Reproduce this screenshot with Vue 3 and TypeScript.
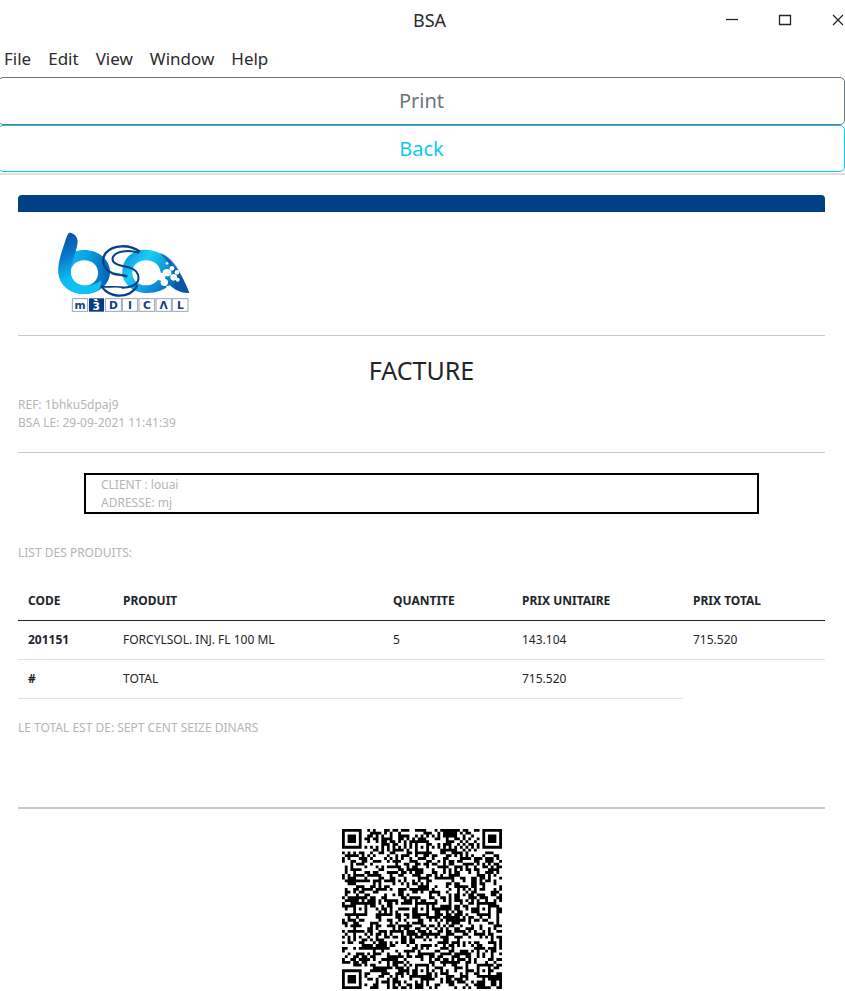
<script setup lang="ts">
const menus: string[] = ['File', 'Edit', 'View', 'Window', 'Help']

interface Line {
  code: string
  product: string
  quantity: number
  unitPrice: string
  total: string
}

const lines: Line[] = [
  { code: '201151', product: 'FORCYLSOL. INJ. FL 100 ML', quantity: 5, unitPrice: '143.104', total: '715.520' },
]

// 57 modules a side: finders, timing tracks and alignment marks over a seeded body.
const SIZE = 57

function buildCode(): string {
  const grid: boolean[][] = []
  let seed = 20210929
  for (let y = 0; y < SIZE; y++) {
    const row: boolean[] = []
    for (let x = 0; x < SIZE; x++) {
      seed ^= seed << 13
      seed ^= seed >>> 17
      seed ^= seed << 5
      row.push(((seed >>> 9) & 255) < 130)
    }
    grid.push(row)
  }
  const finder = (cx: number, cy: number): void => {
    for (let dy = -4; dy <= 4; dy++) {
      for (let dx = -4; dx <= 4; dx++) {
        const x = cx + dx
        const y = cy + dy
        if (x < 0 || y < 0 || x >= SIZE || y >= SIZE) continue
        const ring = Math.max(Math.abs(dx), Math.abs(dy))
        grid[y][x] = ring !== 2 && ring !== 4
      }
    }
  }
  for (let i = 0; i < SIZE; i++) {
    grid[6][i] = i % 2 === 0
    grid[i][6] = i % 2 === 0
  }
  const marks: number[][] = [[28, 6], [6, 28], [28, 28], [50, 28], [28, 50], [50, 50]]
  for (const [cx, cy] of marks) {
    for (let dy = -2; dy <= 2; dy++) {
      for (let dx = -2; dx <= 2; dx++) {
        grid[cy + dy][cx + dx] = Math.max(Math.abs(dx), Math.abs(dy)) !== 1
      }
    }
  }
  finder(3, 3)
  finder(SIZE - 4, 3)
  finder(3, SIZE - 4)
  let d = ''
  for (let y = 0; y < SIZE; y++) {
    let x = 0
    while (x < SIZE) {
      if (!grid[y][x]) {
        x++
        continue
      }
      const start = x
      while (x < SIZE && grid[y][x]) x++
      d += `M${start} ${y}h${x - start}v1h-${x - start}z`
    }
  }
  return d
}

const codePath = buildCode()
const printInvoice = (): void => window.print()
const goBack = (): void => window.history.back()
</script>

<template>
  <div class="window">
    <header class="titlebar">
      <span class="title">BSA</span>
      <div class="controls">
        <button type="button" aria-label="Minimize">
          <svg width="14" height="14" viewBox="0 0 14 14"><path d="M1 6.5h12" /></svg>
        </button>
        <button type="button" aria-label="Maximize">
          <svg width="14" height="14" viewBox="0 0 14 14"><path d="M1.5 2.5h11v9h-11z" /></svg>
        </button>
        <button type="button" aria-label="Close">
          <svg width="14" height="14" viewBox="0 0 14 14"><path d="M2 2l10 10M12 2L2 12" /></svg>
        </button>
      </div>
    </header>

    <nav class="menubar">
      <button v-for="menu in menus" :key="menu" type="button">{{ menu }}</button>
    </nav>

    <div class="actions">
      <button type="button" class="btn print" @click="printInvoice">Print</button>
      <button type="button" class="btn back" @click="goBack">Back</button>
    </div>

    <main class="invoice">
      <div class="band"></div>

      <svg class="logo" width="150" height="95" viewBox="0 0 450 285" role="img" aria-label="BSA Medical">
        <defs>
          <linearGradient id="stem" x1="0" y1="0" x2="0.3" y2="1">
            <stop offset="0" stop-color="#064b9b" />
            <stop offset="0.4" stop-color="#0878ca" />
            <stop offset="0.75" stop-color="#0bbcf2" />
            <stop offset="1" stop-color="#0fc3f6" />
          </linearGradient>
          <linearGradient id="bowl" x1="0" y1="0.4" x2="1" y2="0.6">
            <stop offset="0" stop-color="#14c6f6" />
            <stop offset="0.5" stop-color="#0aa0e2" />
            <stop offset="1" stop-color="#0660b0" />
          </linearGradient>
          <linearGradient id="ring" x1="0" y1="0" x2="1" y2="0.6">
            <stop offset="0" stop-color="#0a83cd" />
            <stop offset="0.35" stop-color="#1bcbf8" />
            <stop offset="0.7" stop-color="#0d91d8" />
            <stop offset="1" stop-color="#075cad" />
          </linearGradient>
        </defs>
        <path fill="url(#bowl)" fill-rule="evenodd" d="M103 75C146 75 180 104 180 141C180 178 146 207 103 207C60 207 26 178 26 141C26 104 60 75 103 75ZM103 106C79 106 62 122 62 144C62 166 79 182 103 182C127 182 144 166 144 144C144 122 127 106 103 106Z" />
        <path fill="url(#stem)" d="M57 23C72 24 82 34 83 48C83 65 75 84 68 112C58 129 60 157 75 170C95 187 130 187 153 166C158 190 139 207 103 207C60 207 29 181 25 143C22 116 35 81 45 50C50 36 52 28 57 23Z" />
        <path fill="url(#ring)" fill-rule="evenodd" d="M284 74C318 74 346 88 366 112C386 136 405 170 418 204C394 205 374 195 359 180C342 196 318 204 292 204C251 204 217 178 217 140C217 102 247 74 284 74ZM289 106C264 106 247 121 247 143C247 165 264 181 288 181C312 181 331 165 331 143C331 121 313 106 289 106Z" />
        <path fill="#0651a4" d="M330 85C368 91 397 149 418 204C398 203 382 194 370 182C382 165 371 127 330 85Z" opacity="0.65" />
        <g fill="#fff">
          <ellipse cx="351" cy="143" rx="13" ry="11" />
          <circle cx="366" cy="130" r="7" />
          <circle cx="381" cy="142" r="7" />
          <circle cx="371" cy="157" r="10" />
          <circle cx="383" cy="164" r="6" />
          <circle cx="343" cy="172" r="11" />
          <circle cx="334" cy="155" r="12" />
          <circle cx="351" cy="115" r="4" />
          <circle cx="326" cy="141" r="6" />
          <circle cx="353" cy="186" r="4" />
        </g>
        <g fill="none" stroke="#073f88">
          <path stroke-width="7" d="M270 80C238 57 189 59 168 83C151 105 160 133 188 145C205 151 220 149 232 155" />
          <path stroke-width="6" d="M267 83C233 74 198 78 189 96C182 113 202 121 228 125C256 130 270 146 264 168C257 183 237 188 215 188" />
          <path stroke-width="7" d="M155 182C166 209 208 220 239 205C251 198 258 190 262 181" />
          <path stroke-width="5" d="M152 184C170 189 192 182 219 187" />
        </g>
        <g fill="#fff" stroke="#9aa2ba" stroke-width="3">
          <rect x="67" y="221" width="46" height="38" />
          <rect x="166" y="221" width="48" height="38" />
          <rect x="217" y="221" width="46" height="38" />
          <rect x="267" y="221" width="47" height="38" />
          <rect x="318" y="221" width="46" height="38" />
          <rect x="367" y="221" width="47" height="38" />
        </g>
        <rect x="117" y="220" width="45" height="40" fill="#063d82" />
        <path d="M130 222h10l5 6h-9z" fill="#fff" />
        <g class="letters">
          <text x="90" y="251">m</text>
          <text x="139" y="255" class="inverse">3</text>
          <text x="190" y="251">D</text>
          <text x="240" y="251">I</text>
          <text x="291" y="251">C</text>
          <text x="341" y="251">Λ</text>
          <text x="391" y="251">L</text>
        </g>
      </svg>

      <section class="heading">
        <h1>FACTURE</h1>
        <p>REF: 1bhku5dpaj9</p>
        <p>BSA LE: 29-09-2021 11:41:39</p>
      </section>

      <section class="client">
        <p>CLIENT : louai</p>
        <p>ADRESSE: mj</p>
      </section>

      <p class="caption">LIST DES PRODUITS:</p>

      <table>
        <colgroup>
          <col class="c-code" />
          <col class="c-product" />
          <col class="c-quantity" />
          <col class="c-unit" />
          <col class="c-total" />
        </colgroup>
        <thead>
          <tr>
            <th scope="col">CODE</th>
            <th scope="col">PRODUIT</th>
            <th scope="col">QUANTITE</th>
            <th scope="col">PRIX UNITAIRE</th>
            <th scope="col">PRIX TOTAL</th>
          </tr>
        </thead>
        <tbody>
          <tr v-for="line in lines" :key="line.code">
            <th scope="row">{{ line.code }}</th>
            <td>{{ line.product }}</td>
            <td>{{ line.quantity }}</td>
            <td>{{ line.unitPrice }}</td>
            <td>{{ line.total }}</td>
          </tr>
          <tr>
            <th scope="row">#</th>
            <td colspan="2">TOTAL</td>
            <td>715.520</td>
          </tr>
        </tbody>
      </table>

      <p class="words">LE TOTAL EST DE: SEPT CENT SEIZE DINARS</p>

      <footer>
        <svg class="qr" width="160" height="160" viewBox="0 0 57 57" role="img" aria-label="QR code">
          <path :d="codePath" />
        </svg>
      </footer>
    </main>
  </div>
</template>

<style>
body {
  margin: 0;
  background: #fff;
}
</style>

<style scoped>
.window {
  font-family: "Noto Sans", "Open Sans", sans-serif;
  color: #212529;
  overflow: hidden;
}

button {
  font-family: inherit;
  background: none;
  border: 0;
  padding: 0;
  color: inherit;
}

.titlebar {
  display: grid;
  grid-template-columns: 1fr auto 1fr;
  align-items: center;
  height: 40px;
  padding-left: 14px;
}

.title {
  grid-column: 2;
  font-size: 18px;
  line-height: 24px;
  color: #2b2b2b;
}

.controls {
  display: flex;
  justify-content: flex-end;
  gap: 39px;
}

.controls button {
  display: flex;
}

.controls svg {
  fill: none;
  stroke: #232629;
  stroke-width: 1.3;
}

.menubar {
  display: flex;
  gap: 17px;
  height: 38px;
  margin-bottom: -1px;
  padding-left: 4px;
  align-items: center;
}

.menubar button {
  font-size: 17px;
  line-height: 24px;
  color: #2b2b2b;
}

.actions {
  display: flex;
  flex-direction: column;
  margin-left: -2px;
  padding-bottom: 1px;
  border-bottom: 2px solid #dfe0e0;
}

.btn {
  height: 48px;
  border: 1px solid;
  border-radius: 5px;
  font-size: 20px;
  line-height: 30px;
}

.print {
  color: #6c757d;
}

.back {
  height: 47px;
  color: #0dcaf0;
}

.invoice {
  padding: 20px 20px 2px 18px;
  font-size: 12px;
  line-height: 18px;
}

.invoice p {
  margin: 0;
  color: #b5b5b5;
}

.band {
  height: 17px;
  background: #004085;
  border-radius: 4px 4px 0 0;
}

.logo {
  display: block;
  margin: 13px 0 15px 32px;
}

.letters text {
  font: bold 32px "DejaVu Sans", sans-serif;
  fill: #173f7d;
  text-anchor: middle;
}

.letters .inverse {
  fill: #fff;
}

.heading {
  border: solid #c8c8c8;
  border-width: 1px 0;
  padding: 19px 0 20px;
}

h1 {
  margin: 0 0 11px;
  font-size: 25px;
  font-weight: 400;
  line-height: 30px;
  text-align: center;
}

.client {
  margin: 20px 66px 30px;
  padding: 1px 15px 0;
  border: 2px solid #000;
}

table {
  width: 100%;
  margin: 20px 0;
  table-layout: fixed;
  border-collapse: collapse;
}

th,
td {
  padding: 10px;
  text-align: left;
  border-bottom: 1px solid #dee2e6;
}

thead th {
  border-bottom-color: #212529;
}

.c-code {
  width: 95px;
}

.c-product {
  width: 270px;
}

.c-quantity {
  width: 129px;
}

.c-unit {
  width: 171px;
}

.words {
  min-height: 70px;
}

footer {
  padding-top: 20px;
  margin-top: 18px;
  border-top: 2px solid #c8c8c8;
}

.qr {
  display: block;
  margin: 0 auto;
}
</style>
